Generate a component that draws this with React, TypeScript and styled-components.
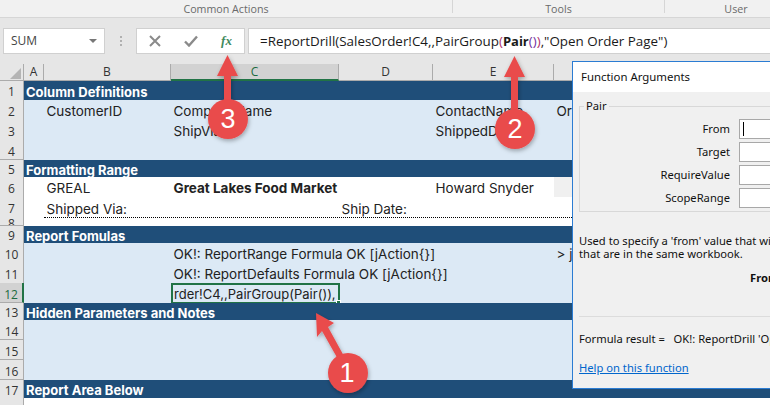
import React from 'react';
import styled, {createGlobalStyle} from 'styled-components';

const GlobalStyle = createGlobalStyle`
  html, body {
    margin: 0;
    padding: 0;
    width: 770px;
    height: 405px;
    overflow: hidden;
    background: #ffffff;
  }
  * {
    box-sizing: border-box;
  }
`

const COLUMNS = '24px 20px 127px 168px 94px 121px 216px'

type RowKind = 'band' | 'light' | 'white'

interface SheetRow {
    n: number
    h: number
    kind: RowKind
    b?: string
    c?: string
    d?: string
    e?: string
    f?: string
    title?: string
    strong?: boolean
    dotted?: boolean
    greyF?: boolean
}

const ROWS: SheetRow[] = [
    {n: 1, h: 19, kind: 'band', title: 'Column Definitions'},
    {n: 2, h: 20, kind: 'light', b: 'CustomerID', c: 'CompanyName', e: 'ContactName', f: 'Or'},
    {n: 3, h: 20, kind: 'light', c: 'ShipVia', e: 'ShippedDate'},
    {n: 4, h: 20, kind: 'light'},
    {n: 5, h: 17, kind: 'band', title: 'Formatting Range'},
    {n: 6, h: 20, kind: 'white', b: 'GREAL', c: 'Great Lakes Food Market', e: 'Howard Snyder', strong: true, greyF: true},
    {n: 7, h: 21, kind: 'white', b: 'Shipped Via:', d: 'Ship Date:', dotted: true},
    {n: 8, h: 8, kind: 'white'},
    {n: 9, h: 17, kind: 'band', title: 'Report Fomulas'},
    {n: 10, h: 20, kind: 'light', c: 'OK!: ReportRange Formula OK [jAction{}]', f: '> j'},
    {n: 11, h: 20, kind: 'light', c: 'OK!: ReportDefaults Formula OK [jAction{}]'},
    {n: 12, h: 20, kind: 'light'},
    {n: 13, h: 17, kind: 'band', title: 'Hidden Parameters and Notes'},
    {n: 14, h: 20, kind: 'light'},
    {n: 15, h: 20, kind: 'light'},
    {n: 16, h: 20, kind: 'light'},
    {n: 17, h: 18, kind: 'band', title: 'Report Area Below'},
    {n: 18, h: 20, kind: 'white'},
]

const ARGUMENTS = ['From', 'Target', 'RequireValue', 'ScopeRange']

const Callouts = () => (
    <CalloutLayer viewBox="0 0 770 405">
        <defs>
            <filter id="soft" x="-30%" y="-30%" width="160%" height="160%">
                <feDropShadow dx="1" dy="2" stdDeviation="2" floodColor="#000000" floodOpacity="0.3"/>
            </filter>
        </defs>
        <g filter="url(#soft)" fill="#e94b4b">
            <path d="M227.500 55 L238 76 L231 76 L231 105 L224 105 L224 76 L217 76 Z"/>
            <circle cx="228" cy="119" r="20"/>
            <path d="M514.500 56 L525 77 L518 77 L518 115 L511 115 L511 77 L504 77 Z"/>
            <circle cx="515" cy="129" r="20"/>
            <path d="M316 313 L334 323 L328 327 L345 358 L339 361 L322 331 L317 337 Z"/>
            <circle cx="348" cy="373" r="20"/>
        </g>
        <CalloutDigit x="228" y="128">3</CalloutDigit>
        <CalloutDigit x="515" y="138">2</CalloutDigit>
        <CalloutDigit x="347" y="382">1</CalloutDigit>
    </CalloutLayer>
)

const App = () => {
    return (
        <Page>
            <GlobalStyle/>
            <RibbonLabels>
                <RibbonLabel $w={453}>Common Actions</RibbonLabel>
                <RibbonLabel $w={212}>Tools</RibbonLabel>
                <RibbonLabel $w={142} $plain>User</RibbonLabel>
            </RibbonLabels>
            <FormulaBar>
                <NameBox>
                    SUM
                    <NameArrow/>
                </NameBox>
                <Grip>
                    <i/><i/><i/>
                </Grip>
                <FormulaButtons>
                    <IconSlot>
                        <svg width="12" height="12" viewBox="0 0 12 12">
                            <path d="M1 1 L11 11 M11 1 L1 11" stroke="#8a8a8a" strokeWidth="2" fill="none"/>
                        </svg>
                    </IconSlot>
                    <IconSlot>
                        <svg width="14" height="12" viewBox="0 0 14 12">
                            <path d="M1 6.500 L5 10.500 L13 1.500" stroke="#8a8a8a" strokeWidth="2.400" fill="none"/>
                        </svg>
                    </IconSlot>
                    <FxLabel>fx</FxLabel>
                </FormulaButtons>
                <FormulaInput>
                    =ReportDrill(SalesOrder!C4,,PairGroup<Paren $color="#b0306a">(</Paren><strong>Pair</strong><Paren
                    $color="#7030a0">()</Paren><Paren $color="#b0306a">)</Paren>,"Open Order Page")
                </FormulaInput>
            </FormulaBar>
            <Sheet>
                <ColumnHeaders>
                    <Corner><CornerMark/></Corner>
                    <ColumnHeader>A</ColumnHeader>
                    <ColumnHeader>B</ColumnHeader>
                    <ColumnHeader $selected>C</ColumnHeader>
                    <ColumnHeader>D</ColumnHeader>
                    <ColumnHeader>E</ColumnHeader>
                    <ColumnHeader/>
                </ColumnHeaders>
                {ROWS.map(row => (
                    <Row key={row.n} $h={row.h} $kind={row.kind} $dotted={row.dotted}>
                        <RowHeader $selected={row.n === 12}>{row.n}</RowHeader>
                        {row.title ? (
                            <BandTitle>{row.title}</BandTitle>
                        ) : (
                            <>
                                <Cell/>
                                <Cell>{row.b}</Cell>
                                <Cell $strong={row.strong}>
                                    {row.c}
                                    {row.n === 12 && <ActiveCell>rder!C4,,PairGroup(Pair()),<FillHandle/></ActiveCell>}
                                </Cell>
                                <Cell>{row.d}</Cell>
                                <Cell>{row.e}</Cell>
                                <Cell $grey={row.greyF}>{row.f}</Cell>
                            </>
                        )}
                    </Row>
                ))}
            </Sheet>
            <Dialog>
                <DialogTitle>Function Arguments</DialogTitle>
                <DialogBody>
                    <ArgumentGroup>
                        <legend>Pair</legend>
                        {ARGUMENTS.map(name => (
                            <ArgumentRow key={name}>
                                <ArgumentLabel>{name}</ArgumentLabel>
                                <ArgumentInput $caret={name === 'From'}/>
                            </ArgumentRow>
                        ))}
                    </ArgumentGroup>
                    <Description>
                        Used to specify a 'from' value that will be passed to the target page<br/>
                        that are in the same workbook.
                    </Description>
                    <ArgumentHelp><b>From</b></ArgumentHelp>
                    <Divider/>
                    <FormulaResult>Formula result =&nbsp;&nbsp; OK!: ReportDrill 'Open Order Page'</FormulaResult>
                    <HelpLink>Help on this function</HelpLink>
                </DialogBody>
            </Dialog>
            <Callouts/>
        </Page>
    );
};

export default App;

const Page = styled.div`
  position: relative;
  width: 770px;
  height: 405px;
  overflow: hidden;
  font-family: "Open Sans", "Liberation Sans", sans-serif;
`
const RibbonLabels = styled.div`
  display: flex;
  height: 18px;
  background: #f1f1f1;
  border-bottom: 1px solid #d6d6d6;
`
const RibbonLabel = styled.div<{ $w: number, $plain?: boolean }>`
  flex: none;
  width: ${p => p.$w}px;
  height: 13px;
  padding-top: 2px;
  border-right: ${p => p.$plain ? 'none' : '1px solid #d6d6d6'};
  color: #6a6a6a;
  font-size: 10.700px;
  line-height: 15px;
  text-align: center;
`
const FormulaBar = styled.div`
  display: flex;
  align-items: center;
  height: 46px;
  padding-left: 3px;
  background: #e6e6e6;
`
const NameBox = styled.div`
  position: relative;
  width: 102px;
  height: 26px;
  padding-left: 7px;
  background: #ffffff;
  border: 1px solid #d0d0d0;
  color: #444444;
  font-size: 12px;
  line-height: 24px;
`
const NameArrow = styled.span`
  position: absolute;
  right: 7px;
  top: 10px;
  border-left: 4px solid transparent;
  border-right: 4px solid transparent;
  border-top: 4px solid #777777;
`
const Grip = styled.div`
  display: flex;
  flex-direction: column;
  gap: 2px;
  width: 31px;
  align-items: center;

  i {
    width: 2px;
    height: 2px;
    background: #b0b0b0;
  }
`
const FormulaButtons = styled.div`
  display: flex;
  align-items: center;
  width: 109px;
  height: 26px;
  background: #ffffff;
  border: 1px solid #d0d0d0;
`
const IconSlot = styled.span`
  display: flex;
  align-items: center;
  justify-content: center;
  width: 36px;
  height: 24px;
`
const FxLabel = styled.span`
  width: 35px;
  color: #3f8a5d;
  font-family: "Liberation Serif", serif;
  font-size: 13px;
  font-style: italic;
  font-weight: 700;
  text-align: center;
`
const FormulaInput = styled.div`
  flex: 1;
  height: 26px;
  margin-left: 3px;
  padding-left: 11px;
  background: #ffffff;
  border: 1px solid #d0d0d0;
  border-right: none;
  color: #1a1a1a;
  font-size: 13.400px;
  line-height: 24px;
  white-space: nowrap;

  strong {
    font-size: 13px;
    font-weight: 700;
  }
`
const Paren = styled.span<{ $color: string }>`
  color: ${p => p.$color};
`
const Sheet = styled.div`
  width: 770px;
  font-family: "Inter", "Liberation Sans", sans-serif;
`
const ColumnHeaders = styled.div`
  display: grid;
  grid-template-columns: ${COLUMNS};
  height: 17px;
  background: #e6e6e6;
  border-bottom: 1px solid #ababab;
`
const Corner = styled.div`
  position: relative;
  border-right: 1px solid #ababab;
`
const CornerMark = styled.span`
  position: absolute;
  right: 2px;
  bottom: 2px;
  border-left: 11px solid transparent;
  border-bottom: 11px solid #b4b4b4;
`
const ColumnHeader = styled.div<{ $selected?: boolean }>`
  height: 17px;
  background: ${p => p.$selected ? '#d2d2d2' : 'transparent'};
  border-right: 1px solid #ababab;
  border-bottom: ${p => p.$selected ? '2px solid #217346' : 'none'};
  color: ${p => p.$selected ? '#1d6b40' : '#333333'};
  font-family: "Open Sans", sans-serif;
  font-size: 12px;
  line-height: 16px;
  text-align: center;
`
const rowBackground = {band: '#1f4e79', light: '#dce9f5', white: '#ffffff'}

const Row = styled.div<{ $h: number, $kind: RowKind, $dotted?: boolean }>`
  position: relative;
  display: grid;
  grid-template-columns: ${COLUMNS};
  height: ${p => p.$h}px;
  background: ${p => rowBackground[p.$kind]};
  color: #222222;
  font-size: 13.500px;
  line-height: ${p => p.$h + 3}px;
  white-space: nowrap;

  &::after {
    content: '';
    display: ${p => p.$dotted ? 'block' : 'none'};
    position: absolute;
    left: 44px;
    right: 0;
    bottom: 0;
    border-bottom: 1px dotted #000000;
  }
`
const RowHeader = styled.div<{ $selected?: boolean }>`
  background: ${p => p.$selected ? '#d2d2d2' : '#e6e6e6'};
  border-right: ${p => p.$selected ? '2px solid #217346' : '1px solid #ababab'};
  border-bottom: 1px solid #ababab;
  color: ${p => p.$selected ? '#1d6b40' : '#333333'};
  font-family: "Open Sans", sans-serif;
  font-size: 12px;
  overflow: hidden;
  text-align: center;
`
const BandTitle = styled.div`
  grid-column: 2 / -1;
  padding-left: 2px;
  color: #ffffff;
  font-size: 13px;
  font-weight: 700;
`
const Cell = styled.div<{ $strong?: boolean, $grey?: boolean }>`
  position: relative;
  padding-left: 2.500px;
  background: ${p => p.$grey ? '#f0f0f0' : 'transparent'};
  font-weight: ${p => p.$strong ? 700 : 400};
`
const ActiveCell = styled.div`
  position: absolute;
  left: 0;
  top: 0;
  width: 169px;
  height: 21px;
  padding-left: 1px;
  overflow: visible;
  border: 2px solid #217346;
  font-size: 13px;
  line-height: 19px;
`
const FillHandle = styled.span`
  position: absolute;
  right: -3px;
  bottom: -3px;
  width: 5px;
  height: 5px;
  background: #217346;
  border: 1px solid #ffffff;
`
const Dialog = styled.div`
  position: absolute;
  left: 572px;
  top: 61px;
  width: 400px;
  height: 328px;
  background: #f0f0f0;
  border: 1px solid #2b7cd3;
  color: #111111;
  font-family: "Noto Sans", "DejaVu Sans", sans-serif;
  font-size: 11.200px;
`
const DialogTitle = styled.div`
  height: 30px;
  padding-left: 8px;
  background: #ffffff;
  font-size: 11.400px;
  line-height: 30px;
`
const DialogBody = styled.div`
  padding: 0 0 0 6px;
`
const ArgumentGroup = styled.fieldset`
  height: 112px;
  margin: 8px 0 0;
  padding: 5px 0 0;
  border: 1px solid #d8d8d8;

  legend {
    margin-left: 4px;
    padding: 0 2px;
    line-height: 12px;
  }
`
const ArgumentRow = styled.div`
  display: flex;
  align-items: center;
  justify-content: flex-end;
  width: 229px;
  height: 23px;
`
const ArgumentLabel = styled.span`
  margin-right: 9px;
`
const ArgumentInput = styled.span<{ $caret?: boolean }>`
  display: block;
  flex: none;
  width: 70px;
  height: 20px;
  padding: 2px 0 0 3px;
  background: #ffffff;
  border: 1px solid #a8a8a8;
  &::before {
    content: '';
    display: ${p => p.$caret ? 'block' : 'none'};
    width: 1px;
    height: 14px;
    background: #000000;
  }
`
const Description = styled.p`
  margin: 22px 0 0;
  line-height: 13px;
  white-space: nowrap;
`
const ArgumentHelp = styled.p`
  margin: 11px 0 0 171px;
  line-height: 14px;
`
const Divider = styled.div`
  height: 1px;
  margin-top: 31px;
  background: #dcdcdc;
`
const FormulaResult = styled.p`
  margin: 15px 0 0;
  line-height: 14px;
  white-space: nowrap;
`
const HelpLink = styled.a`
  display: block;
  margin-top: 15px;
  color: #0066cc;
  line-height: 14px;
  text-decoration: underline;
`
const CalloutLayer = styled.svg`
  position: absolute;
  left: 0;
  top: 0;
  width: 770px;
  height: 405px;
  pointer-events: none;
`
const CalloutDigit = styled.text`
  fill: #ffffff;
  font-family: "Liberation Sans", sans-serif;
  font-size: 27px;
  text-anchor: middle;
`
